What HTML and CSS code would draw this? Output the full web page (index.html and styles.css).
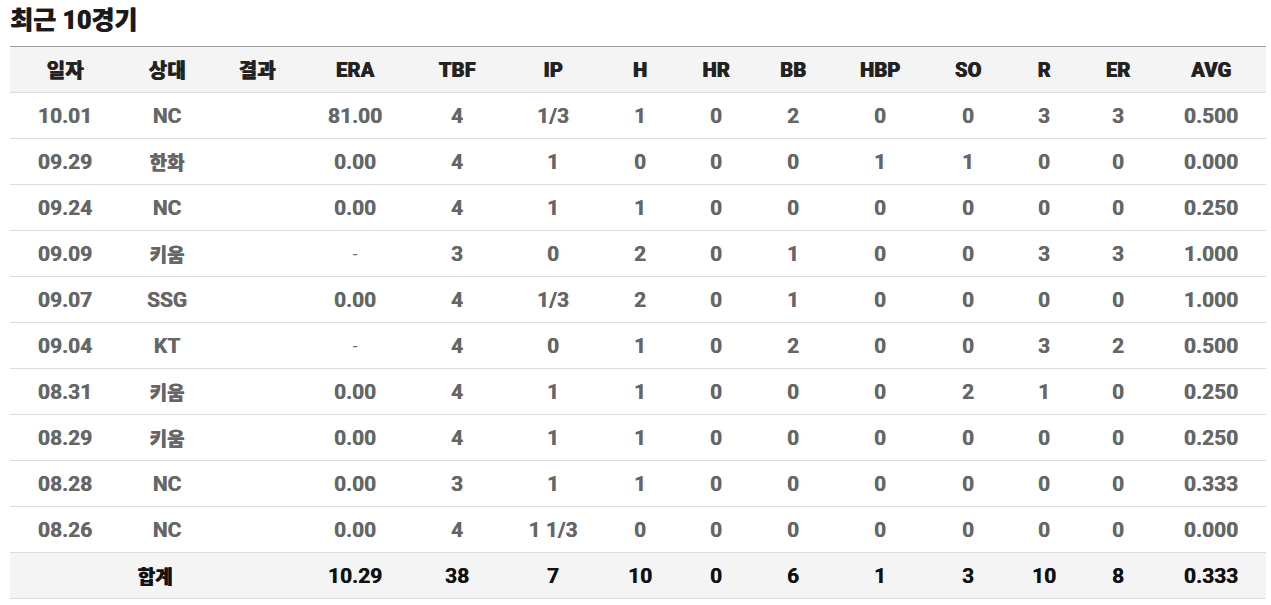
FILE: index.html
```html
<!DOCTYPE html>
<html lang="ko">
<head>
<meta charset="utf-8">
<link rel="stylesheet" href="styles.css">
</head>
<body>
<h2 class="title">최근 10경기</h2>
<table class="stats">
  <colgroup>
    <col class="c-date"><col class="c-opp"><col class="c-res"><col class="c-era"><col class="c-tbf"><col class="c-ip"><col class="c-h"><col class="c-hr"><col class="c-bb"><col class="c-hbp"><col class="c-so"><col class="c-r"><col class="c-er"><col class="c-avg">
  </colgroup>
  <thead>
    <tr><th>일자</th><th>상대</th><th>결과</th><th>ERA</th><th>TBF</th><th>IP</th><th>H</th><th>HR</th><th>BB</th><th>HBP</th><th>SO</th><th>R</th><th>ER</th><th>AVG</th></tr>
  </thead>
  <tbody>
    <tr><td>10.01</td><td>NC</td><td></td><td>81.00</td><td>4</td><td>1/3</td><td>1</td><td>0</td><td>2</td><td>0</td><td>0</td><td>3</td><td>3</td><td>0.500</td></tr>
    <tr><td>09.29</td><td class="ko">한화</td><td></td><td>0.00</td><td>4</td><td>1</td><td>0</td><td>0</td><td>0</td><td>1</td><td>1</td><td>0</td><td>0</td><td>0.000</td></tr>
    <tr><td>09.24</td><td>NC</td><td></td><td>0.00</td><td>4</td><td>1</td><td>1</td><td>0</td><td>0</td><td>0</td><td>0</td><td>0</td><td>0</td><td>0.250</td></tr>
    <tr><td>09.09</td><td class="ko">키움</td><td></td><td class="dash">-</td><td>3</td><td>0</td><td>2</td><td>0</td><td>1</td><td>0</td><td>0</td><td>3</td><td>3</td><td>1.000</td></tr>
    <tr><td>09.07</td><td>SSG</td><td></td><td>0.00</td><td>4</td><td>1/3</td><td>2</td><td>0</td><td>1</td><td>0</td><td>0</td><td>0</td><td>0</td><td>1.000</td></tr>
    <tr><td>09.04</td><td>KT</td><td></td><td class="dash">-</td><td>4</td><td>0</td><td>1</td><td>0</td><td>2</td><td>0</td><td>0</td><td>3</td><td>2</td><td>0.500</td></tr>
    <tr><td>08.31</td><td class="ko">키움</td><td></td><td>0.00</td><td>4</td><td>1</td><td>1</td><td>0</td><td>0</td><td>0</td><td>2</td><td>1</td><td>0</td><td>0.250</td></tr>
    <tr><td>08.29</td><td class="ko">키움</td><td></td><td>0.00</td><td>4</td><td>1</td><td>1</td><td>0</td><td>0</td><td>0</td><td>0</td><td>0</td><td>0</td><td>0.250</td></tr>
    <tr><td>08.28</td><td>NC</td><td></td><td>0.00</td><td>3</td><td>1</td><td>1</td><td>0</td><td>0</td><td>0</td><td>0</td><td>0</td><td>0</td><td>0.333</td></tr>
    <tr><td>08.26</td><td>NC</td><td></td><td>0.00</td><td>4</td><td>1 1/3</td><td>0</td><td>0</td><td>0</td><td>0</td><td>0</td><td>0</td><td>0</td><td>0.000</td></tr>
  </tbody>
  <tfoot>
    <tr><td colspan="3" class="ko">합계</td><td>10.29</td><td>38</td><td>7</td><td>10</td><td>0</td><td>6</td><td>1</td><td>3</td><td>10</td><td>8</td><td>0.333</td></tr>
  </tfoot>
</table>
</body>
</html>
```
FILE: styles.css
```css
html, body {
  margin: 0;
  padding: 0;
  background: #fff;
}
body {
  padding: 0 5px 0 10px;
  font-family: Roboto, "Noto Sans CJK KR", sans-serif;
  font-weight: 700;
}
.title {
  margin: 0;
  padding-top: 4px;
  height: 46px;
  box-sizing: border-box;
  font-size: 25px;
  line-height: 34px;
  font-weight: 900;
  color: #1a1a1a;
  text-shadow: 0.6px 0 0 currentColor;
}
.stats {
  width: 1256px;
  border-collapse: collapse;
  table-layout: fixed;
  border-top: 1px solid #999;
}
.stats th, .stats td {
  height: 45px;
  padding: 0;
  text-align: center;
  vertical-align: middle;
  font-size: 21px;
  font-weight: 700;
  border-bottom: 1px solid #dcdcdc;
}
.stats th {
  background: #f4f4f4;
  color: #222;
  font-size: 20px;
  font-weight: 900;
  letter-spacing: 0.2px;
  text-shadow: 0.7px 0 0 currentColor;
}
.stats tbody td {
  color: #666;
  text-shadow: 0.3px 0 0 currentColor;
}
.stats tbody td.ko {
  font-size: 19px;
  font-weight: 900;
}
.stats tbody td.dash {
  font-weight: 400;
  font-size: 17px;
  text-shadow: none;
}
.stats tfoot td {
  background: #f4f4f4;
  color: #111;
  text-shadow: 0.4px 0 0 currentColor;
}
.stats tfoot td.ko {
  font-size: 19px;
  font-weight: 900;
}
.c-date { width: 110px; }
.c-opp { width: 94px; }
.c-res { width: 86px; }
.c-era { width: 110px; }
.c-tbf { width: 94px; }
.c-ip { width: 98px; }
.c-h { width: 76px; }
.c-hr { width: 76px; }
.c-bb { width: 78px; }
.c-hbp { width: 96px; }
.c-so { width: 80px; }
.c-r { width: 72px; }
.c-er { width: 76px; }
.c-avg { width: 110px; }
```
